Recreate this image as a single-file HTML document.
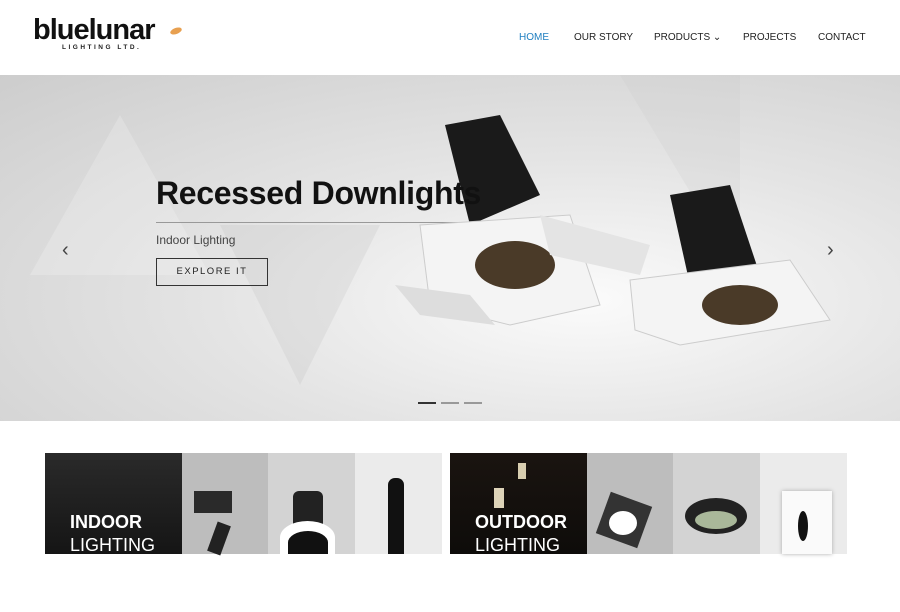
<!DOCTYPE html>
<html><head><meta charset="utf-8"><style>
*{margin:0;padding:0;box-sizing:border-box}
body{width:900px;height:554px;overflow:hidden;background:#fff;font-family:"Liberation Sans",sans-serif;position:relative}
.logo{position:absolute;left:33px;top:14px;font-weight:bold;font-size:29px;letter-spacing:-1px;color:#111}
.sub{position:absolute;left:62px;top:44px;font-size:6.5px;letter-spacing:2.5px;font-weight:bold;color:#222}
nav a{position:absolute;top:32px;font-size:10px;color:#222;text-decoration:none}
.hero{position:absolute;left:0;top:75px;width:900px;height:346px;background:radial-gradient(ellipse at 65% 65%,#fbfbfb 0%,#e4e4e4 45%,#cdcdcd 100%);overflow:hidden}
.tri{position:absolute;width:0;height:0;border-style:solid}
h1{position:absolute;left:156px;top:100px;font-size:32px;color:#111;font-weight:bold;letter-spacing:-0.3px;z-index:3}
.card{position:absolute;top:453px;height:101px;display:flex}
.card div{height:101px;position:relative}
.lbl{position:absolute;left:25px;top:58px;color:#fff;font-size:18px;line-height:23px}
</style></head><body>
<div class="logo">bluelunar</div>
<div class="sub">LIGHTING LTD.</div>
<div style="position:absolute;left:170px;top:28px;width:12px;height:6px;background:#e8a050;border-radius:50%;transform:rotate(-20deg)"></div>
<nav>
<a style="left:519px;color:#1f7fc0">HOME</a>
<a style="left:574px">OUR STORY</a>
<a style="left:654px">PRODUCTS ⌄</a>
<a style="left:743px">PROJECTS</a>
<a style="left:818px">CONTACT</a>
</nav>
<div class="hero">
<div class="tri" style="left:30px;top:40px;border-width:0 90px 160px 90px;border-color:transparent transparent rgba(255,255,255,.2) transparent"></div>
<div class="tri" style="left:220px;top:150px;border-width:160px 80px 0 80px;border-color:rgba(180,180,180,.18) transparent transparent transparent"></div>
<div class="tri" style="left:620px;top:0;border-width:0 120px 200px 0;border-color:transparent rgba(200,200,200,.2) transparent transparent"></div>
<div style="position:absolute;left:156px;top:147px;width:320px;height:1px;background:#999"></div>
<div style="position:absolute;left:156px;top:158px;font-size:12px;color:#444">Indoor Lighting</div>
<div style="position:absolute;left:156px;top:183px;width:112px;height:28px;border:1px solid #333;font-size:9.5px;letter-spacing:1.5px;color:#222;text-align:center;line-height:26px">EXPLORE IT</div>
<div style="position:absolute;left:62px;top:164px;font-size:20px;color:#444">&lsaquo;</div>
<div style="position:absolute;left:827px;top:164px;font-size:20px;color:#444">&rsaquo;</div>
<svg style="position:absolute;left:0;top:0" width="900" height="346">
<polygon points="445,50 500,40 540,120 470,150" fill="#1a1a1a"/>
<polygon points="420,150 570,140 600,230 510,250 430,230" fill="#f4f4f4" stroke="#ccc"/>
<ellipse cx="515" cy="190" rx="40" ry="24" fill="#4a3a28"/>
<polygon points="395,210 470,220 495,250 420,240" fill="#ddd"/>
<polygon points="540,140 650,170 640,200 550,180" fill="#e4e4e4"/>
<polygon points="670,120 730,110 760,200 690,210" fill="#1a1a1a"/>
<polygon points="630,205 790,185 830,245 680,270 635,255" fill="#f4f4f4" stroke="#ccc"/>
<ellipse cx="740" cy="230" rx="38" ry="20" fill="#4a3a28"/>
<rect x="418" y="327" width="18" height="2" fill="#333"/><rect x="441" y="327" width="18" height="2" fill="#999"/><rect x="464" y="327" width="18" height="2" fill="#999"/>
</svg>
<h1 style="top:100px">Recessed Downlights</h1>
</div>
<div class="card" style="left:45px">
<div style="width:137px;background:linear-gradient(#2a2a2a,#151515)"><div class="lbl"><b>INDOOR</b><br>LIGHTING</div></div>
<div style="width:86px;background:#bdbdbd"><div style="position:absolute;left:12px;top:38px;width:38px;height:22px;background:#2a2a2a"></div><div style="position:absolute;left:30px;top:70px;width:14px;height:31px;background:#222;transform:rotate(20deg)"></div></div>
<div style="width:87px;background:#d3d3d3"><div style="position:absolute;left:25px;top:38px;width:30px;height:35px;background:#222;border-radius:6px 6px 0 0"></div><div style="position:absolute;left:12px;top:68px;width:55px;height:33px;background:#fff;border-radius:50% 50% 0 0"></div><div style="position:absolute;left:20px;top:78px;width:40px;height:23px;background:#111;border-radius:50% 50% 0 0"></div></div>
<div style="width:87px;background:#ebebeb"><div style="position:absolute;left:33px;top:25px;width:16px;height:76px;background:#111;border-radius:7px 7px 0 0"></div></div>
</div>
<div class="card" style="left:450px">
<div style="width:137px;background:linear-gradient(#1a1410,#0e0c0a)"><div style="position:absolute;left:44px;top:35px;width:10px;height:20px;background:#ddd3b8"></div><div style="position:absolute;left:68px;top:10px;width:8px;height:16px;background:#d8ceb0"></div><div class="lbl"><b>OUTDOOR</b><br>LIGHTING</div></div>
<div style="width:86px;background:#bdbdbd"><div style="position:absolute;left:15px;top:45px;width:44px;height:44px;background:#333;transform:rotate(20deg)"></div><div style="position:absolute;left:22px;top:58px;width:28px;height:24px;background:#fff;border-radius:50%"></div></div>
<div style="width:87px;background:#d3d3d3"><div style="position:absolute;left:12px;top:45px;width:62px;height:36px;background:#222;border-radius:50%"></div><div style="position:absolute;left:22px;top:58px;width:42px;height:18px;background:#a9b89a;border-radius:50%"></div></div>
<div style="width:87px;background:#ebebeb"><div style="position:absolute;left:22px;top:38px;width:50px;height:63px;background:#fafafa;box-shadow:0 0 4px #aaa"></div><div style="position:absolute;left:38px;top:58px;width:10px;height:30px;background:#111;border-radius:50%"></div></div>
</div>
</body></html>
